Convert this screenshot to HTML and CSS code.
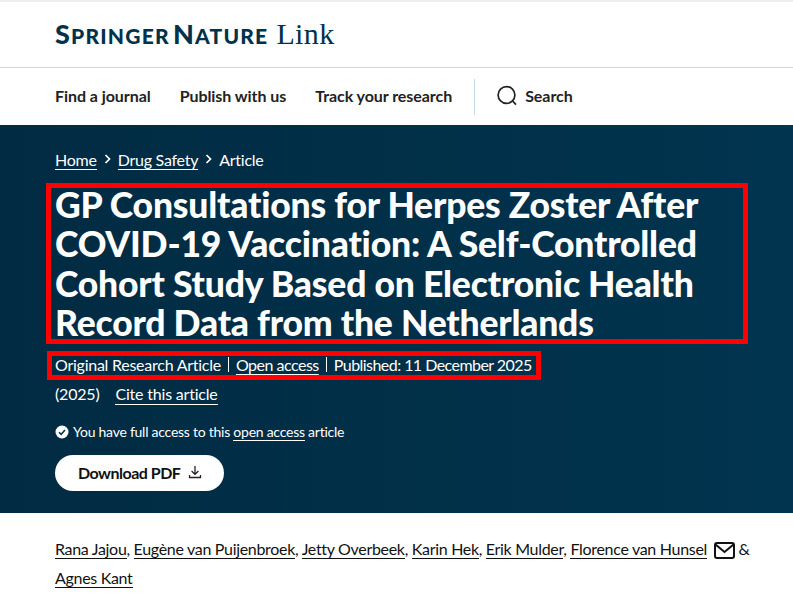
FILE: index.html
```html
<!DOCTYPE html>
<html lang="en">
<head>
    <meta charset="utf-8">
    <title>GP Consultations for Herpes Zoster After COVID-19 Vaccination</title>
    <link rel="stylesheet" href="styles.css">
</head>
<body>
<header class="masthead">
    <a class="logo" href="#"><span class="logo-sn"><span class="cap">S</span>PRINGER <span class="cap">N</span>ATURE</span> <span class="logo-link">Link</span></a>
</header>
<nav class="mainnav">
    <a href="#">Find a journal</a>
    <a href="#">Publish with us</a>
    <a href="#">Track your research</a>
    <span class="nav-rule"></span>
    <a class="nav-search" href="#">
        <svg width="22" height="22" viewBox="0 0 22 22" fill="none" stroke="#222" stroke-width="1.7"><circle cx="10.5" cy="10" r="8.4"/><path d="M16.6 16l3.4 3.6"/></svg>
        Search
    </a>
</nav>
<section class="hero">
    <ol class="crumbs">
        <li><a href="#">Home</a></li>
        <li class="chev"><svg width="7" height="10" viewBox="0 0 7 10" fill="none" stroke="#fff" stroke-width="1.7"><path d="M1.5 1l4 4-4 4"/></svg></li>
        <li><a href="#">Drug Safety</a></li>
        <li class="chev"><svg width="7" height="10" viewBox="0 0 7 10" fill="none" stroke="#fff" stroke-width="1.7"><path d="M1.5 1l4 4-4 4"/></svg></li>
        <li>Article</li>
    </ol>
    <h1 class="title">GP Consultations for Herpes Zoster After COVID-19 Vaccination: A Self-Controlled Cohort Study Based on Electronic Health Record Data from the Netherlands</h1>
    <ul class="meta">
        <li>Original Research Article</li>
        <li class="bar"></li>
        <li class="oa"><a href="#">Open access</a></li>
        <li class="bar"></li>
        <li class="published">Published: 11 December 2025</li>
    </ul>
    <p class="cite"><span>(2025)</span><a href="#">Cite this article</a></p>
    <p class="access">
        <svg width="14" height="14" viewBox="0 0 14 14"><circle cx="7" cy="7" r="6.5" fill="#fff"/><path d="M4 7.2l2.2 2.1L10 5" fill="none" stroke="#012f47" stroke-width="1.5"/></svg>
        <span>You have full access to this <a href="#">open access</a> article</span>
    </p>
    <a class="pdf" href="#">Download PDF
        <svg width="14" height="14" viewBox="0 0 14 14" fill="none" stroke="#222" stroke-width="1.3"><path d="M7 1v8M3.6 6L7 9.4 10.4 6M1.5 10v2.5h11V10"/></svg>
    </a>
</section>
<p class="authors">
    <a href="#">Rana Jajou</a>, <a href="#">Eugène van Puijenbroek</a>, <a href="#">Jetty Overbeek</a>, <a href="#">Karin Hek</a>, <a href="#">Erik Mulder</a>, <a href="#">Florence van Hunsel</a>
    <svg class="mail" width="21" height="17" viewBox="0 0 21 17" fill="none" stroke="#111" stroke-width="2"><rect x="1" y="1" width="19" height="15" rx="2"/><path d="M1.5 2.5l9 7.5 9-7.5"/></svg>
    &amp;<br>
    <a href="#">Agnes Kant</a>
</p>
</body>
</html>
```

FILE: styles.css
```css
* {box-sizing:border-box; margin:0; padding:0}
body {font-family:"Lato", "Noto Sans", sans-serif; font-variant-ligatures:none; color:#222; background:#fff; overflow:hidden}
a {color:inherit; text-decoration:none}
ol, ul {list-style:none}

.masthead {height:68px; padding:15px 55px 0; border-top:2px solid #eee; border-bottom:1px solid #c5d9e8}
.logo {display:flex; align-items:baseline; color:#01324b; white-space:pre}
.logo-sn {font-weight:900; font-size:21px; letter-spacing:1.2px; word-spacing:-3px}
.logo-sn .cap {font-size:27px}
.logo-link {font-family:"Liberation Serif", serif; font-size:30px; margin-left:8px; letter-spacing:.4px}

.mainnav {height:57px; padding:0 55px; display:flex; align-items:center; font-size:16px; font-weight:700; letter-spacing:-.06px; gap:29px}
.mainnav a {margin-top:-2px}
.nav-rule {width:1px; height:36px; background:#c5d9e8; margin-left:-7px; margin-right:-8px}
.nav-search {display:flex; align-items:center; gap:7px}

.hero {height:388px; padding:24px 55px 0; color:#fff; background:linear-gradient(90deg, #012b42 0%, #01344f 100%)}
.crumbs {display:flex; align-items:center; gap:7px; font-size:16px; letter-spacing:-.25px; height:20px}
.crumbs a, .cite a, .access a {border-bottom:1px solid #fff}
.chev {display:flex}

.title {position:relative; width:684px; margin-top:16px; font-size:35.5px; line-height:39.3px; font-weight:900; letter-spacing:-.2px}
.title::after {content:""; position:absolute; inset:-2px -9px -2px; border:5px solid #f00}

.meta {position:relative; display:inline-flex; align-items:center; gap:7px; margin-top:12px; font-size:16px; letter-spacing:-.25px; height:20px; vertical-align:top}
.meta::after {content:""; position:absolute; inset:-3px -9px -6px -8px; border:5px solid #f00}
.meta .bar {width:1px; height:15px; background:#fff}
.meta .oa {letter-spacing:-.5px}
.meta a {text-decoration:underline; text-decoration-thickness:1px; text-underline-offset:3px}
.meta .published {letter-spacing:-.55px}
.cite {display:flex; gap:16px; margin-top:10px; font-size:16px; letter-spacing:-.2px; line-height:20px}
.access {display:flex; align-items:center; gap:4px; margin-top:18px; font-size:14px; letter-spacing:-.25px; line-height:18px}
.pdf {display:inline-flex; align-items:center; gap:8px; margin-top:14px; height:36px; padding:0 22px 2px 23px; border-radius:18px; background:#fff; color:#111; font-size:16px; font-weight:700; letter-spacing:-.5px}

.authors {padding:21px 30px 0 55px; font-size:16px; line-height:29px; letter-spacing:-.31px; color:#111}
.authors a {border-bottom:1px solid #111}
.mail {vertical-align:-4px; margin-left:3px}
```
